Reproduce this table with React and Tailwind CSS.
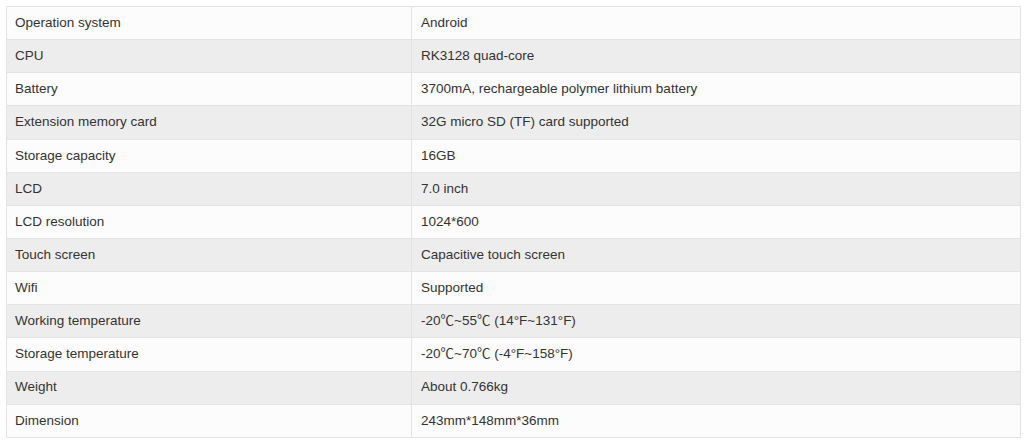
const specs = [
  ["Operation system", "Android"],
  ["CPU", "RK3128 quad-core"],
  ["Battery", "3700mA, rechargeable polymer lithium battery"],
  ["Extension memory card", "32G micro SD (TF) card supported"],
  ["Storage capacity", "16GB"],
  ["LCD", "7.0 inch"],
  ["LCD resolution", "1024*600"],
  ["Touch screen", "Capacitive touch screen"],
  ["Wifi", "Supported"],
  ["Working temperature", "-20℃~55℃ (14°F~131°F)"],
  ["Storage temperature", "-20℃~70℃ (-4°F~158°F)"],
  ["Weight", "About 0.766kg"],
  ["Dimension", "243mm*148mm*36mm"],
];

export default function App() {
  return (
    <div className="w-[1024px] h-[443px] bg-white pt-[6px] pl-[6px] font-['Liberation_Sans','Noto_Sans_CJK_SC',Arial,sans-serif] text-[13.5px] text-[#333333]">
      <table className="w-[1015px] border-collapse">
        <tbody>
          {specs.map(([label, value], i) => (
            <tr key={label} className={i % 2 === 0 ? "bg-[#fcfcfc]" : "bg-[#ededed]"}>
              <td className="w-[405px] h-[33.15px] border border-[#e3e3e3] pl-[8px] align-middle">{label}</td>
              <td className="h-[33.15px] border border-[#e3e3e3] pl-[9px] align-middle">{value}</td>
            </tr>
          ))}
        </tbody>
      </table>
    </div>
  );
}
